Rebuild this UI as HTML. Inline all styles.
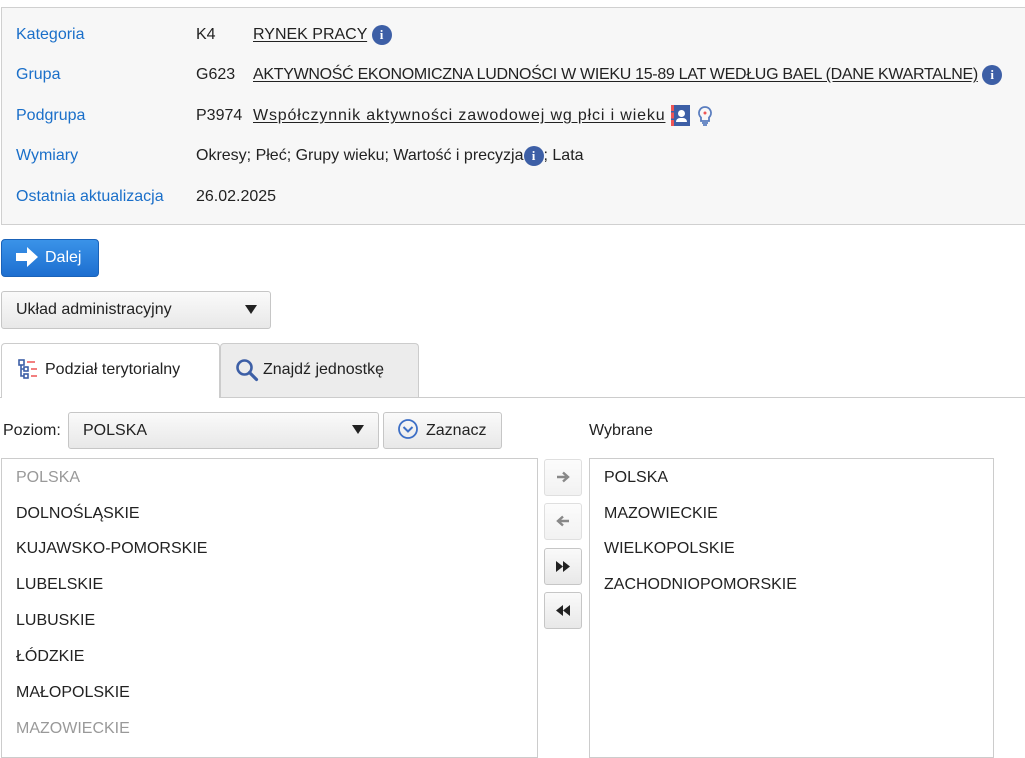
<!DOCTYPE html>
<html><head><meta charset="utf-8"><style>
*{box-sizing:border-box;margin:0;padding:0}
body{width:1025px;height:745px;overflow:hidden;background:#fff;font-family:"Liberation Sans",sans-serif;font-size:16px;line-height:22px;color:#222;position:relative}
.a{position:absolute;white-space:nowrap}
.box{left:1px;top:7px;width:1030px;height:218px;background:#f7f7f7;border:1px solid #d0d0d0}
.lbl{color:#1a6fc9}
u{text-decoration:underline;text-underline-offset:2px}
.info{display:inline-block;width:20px;height:20px;border-radius:50%;background:#3d5fa6;color:#fff;font:bold 13px "Liberation Serif",serif;text-align:center;line-height:20px;vertical-align:-4px;position:relative;top:-4px}
.btn{border:1px solid #c6c6c6;border-radius:3px;background:linear-gradient(#fafafa,#e8e8e8)}
.list{border:1px solid #ccc;background:#fff}
.li{position:absolute;left:15px}
.g{color:#999}
</style></head><body>
<div class="a box"></div>
<div class="a lbl" style="left:16px;top:24px">Kategoria</div>
<div class="a" style="left:196px;top:24px">K4</div>
<div class="a" style="left:253px;top:24px"><u>RYNEK PRACY</u> <span class="info">i</span></div>
<div class="a lbl" style="left:16px;top:64px">Grupa</div>
<div class="a" style="left:196px;top:64px">G623</div>
<div class="a" style="left:253px;top:64px;letter-spacing:-0.3px"><u>AKTYWNOŚĆ EKONOMICZNA LUDNOŚCI W WIEKU 15-89 LAT WEDŁUG BAEL (DANE KWARTALNE)</u> <span class="info">i</span></div>
<div class="a lbl" style="left:16px;top:105px">Podgrupa</div>
<div class="a" style="left:196px;top:105px">P3974</div>
<div class="a" style="left:253px;top:105px;letter-spacing:0.85px"><u>Współczynnik aktywności zawodowej wg płci i wieku</u></div>
<div class="a" style="left:671px;top:105px;width:19px;height:21px;background:#3d5fa6;border-left:3px dashed #e55"></div>
<div class="a" style="left:678px;top:110px;width:7px;height:7px;border-radius:50%;background:#fff"></div>
<div class="a" style="left:676px;top:118px;width:11px;height:4px;border-radius:4px 4px 0 0;background:#fff"></div>
<svg class="a" style="left:697px;top:105px" width="16" height="22" viewBox="0 0 16 22"><path d="M8 2a6 6 0 0 0-4 10.5V16h8v-3.5A6 6 0 0 0 8 2z" fill="none" stroke="#5a7dbf" stroke-width="1.8"/><path d="M5 18h6M6 20h4" stroke="#5a7dbf" stroke-width="1.8"/><circle cx="8" cy="8" r="1.5" fill="#e55"/></svg>
<div class="a lbl" style="left:16px;top:145px">Wymiary</div>
<div class="a" style="left:196px;top:145px">Okresy; Płeć; Grupy wieku; Wartość i precyzja<span class="info">i</span>; Lata</div>
<div class="a lbl" style="left:16px;top:186px">Ostatnia aktualizacja</div>
<div class="a" style="left:196px;top:186px">26.02.2025</div>

<div class="a" style="left:1px;top:239px;width:98px;height:38px;border-radius:4px;background:linear-gradient(#3a93e8,#1d6fd0);border:1px solid #1a62b8"></div>
<svg class="a" style="left:15px;top:246px" width="24" height="22" viewBox="0 0 24 22"><path d="M1 7h11V1l11 10-11 10v-6H1z" fill="#fff"/></svg>
<div class="a" style="left:45px;top:247px;color:#fff;font-size:16px">Dalej</div>

<div class="a btn" style="left:1px;top:291px;width:270px;height:38px"></div>
<div class="a" style="left:16px;top:299px">Układ administracyjny</div>
<div class="a" style="left:245px;top:305px;border-left:6px solid transparent;border-right:6px solid transparent;border-top:9px solid #222"></div>

<div class="a" style="left:0;top:397px;width:1025px;height:1px;background:#ccc"></div>
<div class="a" style="left:1px;top:343px;width:219px;height:55px;background:#fff;border:1px solid #ccc;border-bottom:none;border-radius:4px 4px 0 0"></div>
<div class="a" style="left:220px;top:343px;width:199px;height:54px;background:#ececec;border:1px solid #ccc;border-bottom:none;border-radius:4px 4px 0 0"></div>
<svg class="a" style="left:17px;top:359px" width="22" height="22" viewBox="0 0 22 22"><g fill="none" stroke="#3d5fa6" stroke-width="1.6"><rect x="2" y="1" width="5" height="5"/><rect x="7" y="8" width="4" height="4"/><rect x="7" y="15" width="4" height="4"/><path d="M4 6v11h3M4 10h3"/></g><path d="M10 3h8M14 10h6M14 17h6" stroke="#e55" stroke-width="1.6"/></svg>
<div class="a" style="left:45px;top:359px">Podział terytorialny</div>
<svg class="a" style="left:235px;top:358px" width="24" height="24" viewBox="0 0 24 24"><circle cx="9.5" cy="9.5" r="7" fill="none" stroke="#3d5fa6" stroke-width="2.6"/><path d="M14.5 14.5l7 7" stroke="#3d5fa6" stroke-width="3.2" stroke-linecap="round"/></svg>
<div class="a" style="left:263px;top:359px">Znajdź jednostkę</div>

<div class="a" style="left:3px;top:420px">Poziom:</div>
<div class="a btn" style="left:68px;top:412px;width:311px;height:37px"></div>
<div class="a" style="left:83px;top:420px">POLSKA</div>
<div class="a" style="left:352px;top:425px;border-left:6px solid transparent;border-right:6px solid transparent;border-top:9px solid #222"></div>
<div class="a btn" style="left:383px;top:412px;width:119px;height:37px"></div>
<svg class="a" style="left:397px;top:418px" width="22" height="22" viewBox="0 0 22 22"><circle cx="11" cy="11" r="9" fill="none" stroke="#3d6fc6" stroke-width="1.8"/><path d="M6.5 9l4.5 4.5L15.5 9" fill="none" stroke="#3d6fc6" stroke-width="2"/></svg>
<div class="a" style="left:426px;top:420px">Zaznacz</div>
<div class="a" style="left:589px;top:420px">Wybrane</div>

<div class="a list" style="left:1px;top:458px;width:537px;height:300px"></div>
<div class="a li g" style="left:16px;top:467px">POLSKA</div>
<div class="a li" style="left:16px;top:503px">DOLNOŚLĄSKIE</div>
<div class="a li" style="left:16px;top:538px">KUJAWSKO-POMORSKIE</div>
<div class="a li" style="left:16px;top:574px">LUBELSKIE</div>
<div class="a li" style="left:16px;top:610px">LUBUSKIE</div>
<div class="a li" style="left:16px;top:646px">ŁÓDZKIE</div>
<div class="a li" style="left:16px;top:682px">MAŁOPOLSKIE</div>
<div class="a li g" style="left:16px;top:718px">MAZOWIECKIE</div>

<div class="a btn" style="left:544px;top:459px;width:38px;height:37px;opacity:.55"></div>
<svg class="a" style="left:556px;top:471px" width="14" height="12" viewBox="0 0 14 12"><path d="M1 6h9M7 1.5L12 6l-5 4.5" fill="none" stroke="#888" stroke-width="2.4"/></svg>
<div class="a btn" style="left:544px;top:503px;width:38px;height:37px;opacity:.55"></div>
<svg class="a" style="left:556px;top:515px" width="14" height="12" viewBox="0 0 14 12"><path d="M13 6H4M7 1.5L2 6l5 4.5" fill="none" stroke="#888" stroke-width="2.4"/></svg>
<div class="a btn" style="left:544px;top:548px;width:38px;height:37px"></div>
<svg class="a" style="left:555px;top:561px" width="16" height="11" viewBox="0 0 16 11"><path d="M1 0l7 5.5L1 11zM8 0l7 5.5L8 11z" fill="#222"/></svg>
<div class="a btn" style="left:544px;top:592px;width:38px;height:37px"></div>
<svg class="a" style="left:555px;top:605px" width="16" height="11" viewBox="0 0 16 11"><path d="M8 0L1 5.5 8 11zM15 0L8 5.5 15 11z" fill="#222"/></svg>

<div class="a list" style="left:589px;top:458px;width:405px;height:300px"></div>
<div class="a" style="left:604px;top:467px">POLSKA</div>
<div class="a" style="left:604px;top:503px">MAZOWIECKIE</div>
<div class="a" style="left:604px;top:538px">WIELKOPOLSKIE</div>
<div class="a" style="left:604px;top:574px">ZACHODNIOPOMORSKIE</div>
</body></html>
